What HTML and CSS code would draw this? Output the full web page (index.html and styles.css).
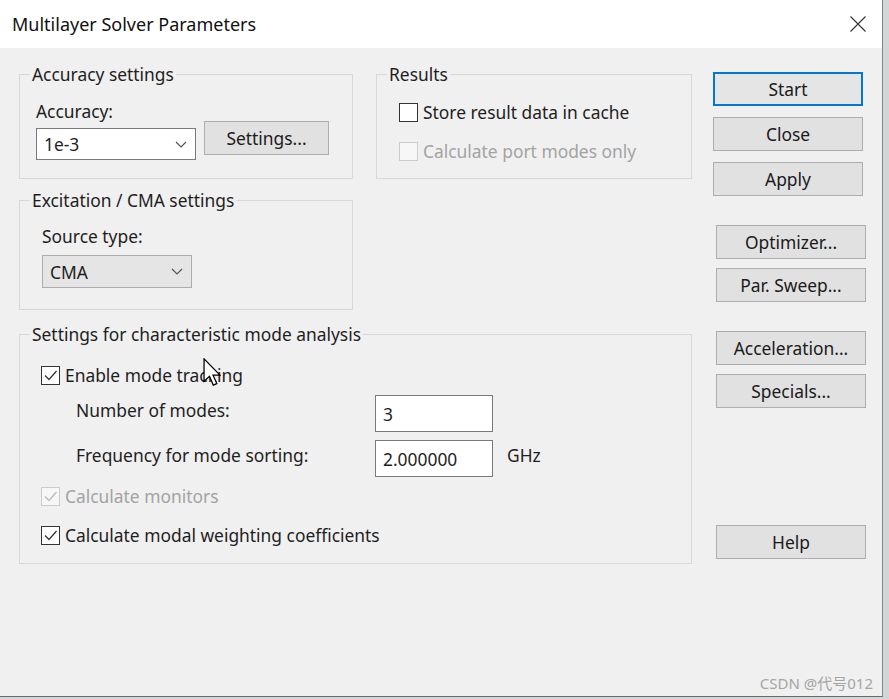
FILE: index.html
```html
<!DOCTYPE html>
<html>
<head>
<meta charset="utf-8">
<title>Multilayer Solver Parameters</title>
<link rel="stylesheet" href="styles.css">
</head>
<body>
<div class="dialog">
  <div class="titlebar">
    <span class="title">Multilayer Solver Parameters</span>
    <svg class="close" viewBox="0 0 16 16"><path d="M0.5 0.5 L15.5 15.5 M15.5 0.5 L0.5 15.5" stroke="#333" stroke-width="1.1" fill="none"/></svg>
  </div>
  <div class="content">
    <div class="main">
      <div class="row">
        <fieldset class="box acc">
          <legend>Accuracy settings</legend>
          <div class="inner acc-inner">
            <div class="label">Accuracy:</div>
            <div class="ctrl-row">
              <div class="select white w160"><span>1e-3</span><svg class="chev" viewBox="0 0 12 7"><path d="M1 1 L6 6 L11 1" stroke="#555" stroke-width="1.2" fill="none"/></svg></div>
              <div class="btn settings">Settings...</div>
            </div>
          </div>
        </fieldset>
        <fieldset class="box res">
          <legend>Results</legend>
          <div class="inner res-inner">
            <div class="check"><span class="cb"></span><span>Store result data in cache</span></div>
            <div class="check disabled"><span class="cb"></span><span>Calculate port modes only</span></div>
          </div>
        </fieldset>
      </div>
      <fieldset class="box exc">
        <legend>Excitation / CMA settings</legend>
        <div class="inner exc-inner">
          <div class="label">Source type:</div>
          <div class="select gray w150"><span>CMA</span><svg class="chev" viewBox="0 0 12 7"><path d="M1 1 L6 6 L11 1" stroke="#555" stroke-width="1.2" fill="none"/></svg></div>
        </div>
      </fieldset>
      <fieldset class="box cma">
        <legend>Settings for characteristic mode analysis</legend>
        <div class="inner cma-inner">
          <div class="check"><span class="cb on"><svg viewBox="0 0 17 17"><path d="M3 8.5 L7 12.5 L14.5 4" stroke="#333" stroke-width="1.3" fill="none"/></svg></span><span>Enable mode tracking</span></div>
          <div class="field first"><span class="flabel">Number of modes:</span><div class="input">3</div></div>
          <div class="field second"><span class="flabel">Frequency for mode sorting:</span><div class="input">2.000000</div><span class="unit">GHz</span></div>
          <div class="check disabled monitors"><span class="cb on"><svg viewBox="0 0 17 17"><path d="M3 8.5 L7 12.5 L14.5 4" stroke="#bdbdbd" stroke-width="1.3" fill="none"/></svg></span><span>Calculate monitors</span></div>
          <div class="check modal"><span class="cb on"><svg viewBox="0 0 17 17"><path d="M3 8.5 L7 12.5 L14.5 4" stroke="#333" stroke-width="1.3" fill="none"/></svg></span><span>Calculate modal weighting coefficients</span></div>
        </div>
      </fieldset>
    </div>
    <div class="buttons">
      <div class="btn side default">Start</div>
      <div class="btn side g11">Close</div>
      <div class="btn side g11">Apply</div>
      <div class="btn side shift g29">Optimizer...</div>
      <div class="btn side shift g9">Par. Sweep...</div>
      <div class="btn side shift g29">Acceleration...</div>
      <div class="btn side shift g9">Specials...</div>
      <div class="btn side shift g117">Help</div>
    </div>
  </div>
  <svg class="cursor" viewBox="0 0 14 23" width="18" height="29"><path d="M0.7 0.7 L0.7 18.5 L5 14.5 L8 21.5 L10.8 20.3 L7.8 13.5 L13.3 13.5 Z" fill="#fff" stroke="#000" stroke-width="1" stroke-linejoin="miter"/></svg>
  <div class="watermark">CSDN @代号012</div>
</div>
</body>
</html>
```

FILE: styles.css
```css
* { box-sizing: border-box; }
html, body { margin: 0; padding: 0; }
body {
  width: 889px;
  height: 699px;
  overflow: hidden;
  background: #d3d6d6;
  font-family: "Noto Sans", "Open Sans", sans-serif;
  font-size: 17.4px;
  color: #1e1e1e;
}
.dialog {
  position: relative;
  width: 883px;
  height: 697px;
  background: #f0f0f0;
  border-right: 1px solid #858585;
  border-bottom: 1px solid #6a6a6a;
  display: flex;
  flex-direction: column;
}
.titlebar {
  flex: none;
  height: 48px;
  background: #fff;
  display: flex;
  align-items: center;
  justify-content: space-between;
  padding: 0 16px 0 12px;
}
.title { font-size: 18px; line-height: 20px; color: #111; }
.close { width: 16px; height: 16px; display: block; }
.content { flex: 1; display: flex; }
.main {
  width: 692px;
  padding-left: 19px;
  padding-top: 16px;
  display: flex;
  flex-direction: column;
}
.row { display: flex; gap: 23px; }
.box {
  margin: 0;
  padding: 0;
  border: 1px solid #d8d8d8;
  min-width: 0;
}
.box legend {
  margin-left: 10px;
  padding: 0 2px;
  font-size: 17.4px;
  line-height: 20px;
}
.acc { width: 334px; }
.res { width: 316px; }
.exc { width: 334px; margin-top: 11px; }
.cma { width: 673px; margin-top: 14px; }
.label { line-height: 20px; }
.acc-inner { padding: 17px 0 18px 16px; }
.ctrl-row { display: flex; align-items: flex-start; gap: 8px; }
.select {
  height: 32px;
  display: flex;
  align-items: center;
  justify-content: space-between;
  padding: 0 8px 0 7px;
}
.select.white { background: #fff; border: 1px solid #7a7a7a; margin-top: 7px; height: 32px; }
.select.gray { background: #e5e5e5; border: 1px solid #adadad; margin-top: 9px; height: 33px; }
.w160 { width: 160px; }
.w150 { width: 150px; }
.chev { width: 12px; height: 7px; }
.btn {
  background: #e1e1e1;
  border: 1px solid #adadad;
  display: flex;
  align-items: center;
  justify-content: center;
  height: 34px;
  line-height: 20px;
  color: #1a1a1a;
}
.settings { width: 125px; }
.res-inner { padding: 18px 0 0 22px; display: flex; flex-direction: column; gap: 19px; }
.check { display: flex; align-items: center; height: 20px; gap: 5px; line-height: 20px; }
.cb {
  width: 19px;
  height: 19px;
  background: #fff;
  border: 1px solid #333;
  display: flex;
  flex: none;
}
.cb svg { width: 17px; height: 17px; }
.check.disabled { color: #a3a3a3; }
.check.disabled .cb { border-color: #cccccc; background: #f7f7f7; }
.exc-inner { padding: 16px 0 21px 22px; }
.cma-inner { padding: 21px 0 18px 21px; display: flex; flex-direction: column; }
.field { display: flex; align-items: center; margin-left: 35px; height: 37px; }
.field.first { margin-top: 10px; height: 37px; }
.field.second { margin-top: 8px; }
.flabel { width: 299px; padding-bottom: 8px; }
.input {
  width: 118px;
  height: 100%;
  background: #fff;
  border: 1px solid #7a7a7a;
  display: flex;
  align-items: center;
  padding-left: 7px;
}
.unit { margin-left: 14px; padding-bottom: 8px; }
.monitors { margin-top: 9px; }
.modal { margin-top: 19px; }
.buttons { margin-left: 21px; padding-top: 24px; display: flex; flex-direction: column; }
.side { width: 150px; }
.side.default { border: 2px solid #0078d7; background: #e5e5e5; }
.shift { margin-left: 3px; }
.g11 { margin-top: 11px; }
.g29 { margin-top: 29px; }
.g9 { margin-top: 9px; }
.g117 { margin-top: 117px; }
.cursor { position: absolute; left: 203px; top: 358px; }
.watermark {
  position: absolute;
  right: 9px;
  bottom: 4px;
  font-family: "Noto Sans", "Noto Sans CJK SC", sans-serif;
  font-size: 15px;
  line-height: 18px;
  color: #a5a5a5;
}
```
